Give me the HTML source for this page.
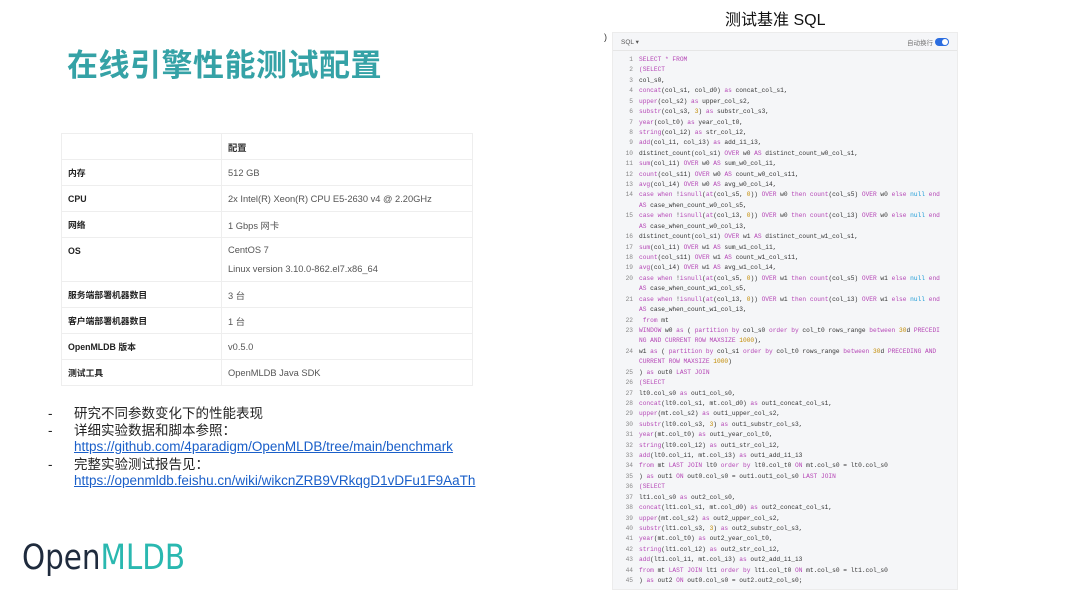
<!DOCTYPE html>
<html><head><meta charset="utf-8"><style>
*{margin:0;padding:0;box-sizing:border-box}
body{width:1080px;height:596px;background:#fff;position:relative;overflow:hidden;font-family:"Liberation Sans","Noto Sans CJK SC",sans-serif}
.title{position:absolute;left:67px;top:40px;font-size:31px;font-weight:bold;color:#35a2a6;letter-spacing:0.5px}
.sub{position:absolute;left:725px;top:6px;font-size:16px;color:#111}
table{position:absolute;left:61px;top:133px;width:412px;border-collapse:collapse;font-size:9.3px;color:#555}
td{border:1px solid #eee;padding:0 6px;height:26px;vertical-align:middle}
td.k{width:160px;font-weight:bold;color:#222;font-size:8.8px}
.bul{position:absolute;left:48px;top:406px;font-size:13.5px;color:#222;line-height:16.5px}
.bul div{position:relative;padding-left:26px}
.bul span.d{position:absolute;left:0}
.bul a{color:#1a5fc9;text-decoration:underline}
.logo{position:absolute;left:22px;top:538px;font-size:35px;letter-spacing:0;font-family:"DejaVu Sans",sans-serif;transform:scale(0.84,1);transform-origin:left top;white-space:nowrap}
.panel{position:absolute;left:612px;top:32px;width:346px;height:558px;background:#f5f6f8;border:1px solid #ececec}
.ph{height:18px;border-bottom:1px solid #e6e6e6;font-size:6.5px;color:#555;position:relative}
.code{position:absolute;left:0;top:22px;font-family:"Liberation Mono",monospace;font-size:6.2px;color:#333;line-height:10.42px;white-space:pre}
.ln{display:inline-block;width:20px;text-align:right;color:#888;margin-right:6px}
.m{color:#b546b6}.n{color:#c28a00}.b{color:#1b9ad6}
</style></head><body>
<div class="title">在线引擎性能测试配置</div>
<div class="sub">测试基准 SQL</div>
<div style="position:absolute;left:604px;top:32px;font-size:9px;color:#333">)</div>
<table>
<tr><td class="k"></td><td style="font-weight:bold;color:#333">配置</td></tr>
<tr><td class="k">内存</td><td>512 GB</td></tr>
<tr><td class="k">CPU</td><td>2x Intel(R) Xeon(R) CPU E5-2630 v4 @ 2.20GHz</td></tr>
<tr><td class="k">网络</td><td>1 Gbps 网卡</td></tr>
<tr><td class="k" style="height:44px;vertical-align:top;padding-top:8px">OS</td><td style="line-height:19px">CentOS 7<br>Linux version 3.10.0-862.el7.x86_64</td></tr>
<tr><td class="k">服务端部署机器数目</td><td>3 台</td></tr>
<tr><td class="k">客户端部署机器数目</td><td>1 台</td></tr>
<tr><td class="k">OpenMLDB 版本</td><td>v0.5.0</td></tr>
<tr><td class="k">测试工具</td><td>OpenMLDB Java SDK</td></tr>
</table>
<div class="bul">
<div><span class="d">-</span>研究不同参数变化下的性能表现</div>
<div><span class="d">-</span>详细实验数据和脚本参照：<br><a>https://github.com/4paradigm/OpenMLDB/tree/main/benchmark</a></div>
<div style="margin-top:1px"><span class="d">-</span>完整实验测试报告见：<br><a>https://openmldb.feishu.cn/wiki/wikcnZRB9VRkqgD1vDFu1F9AaTh</a></div>
</div>
<div class="logo"><span style="color:#1f2b3d">Open</span><span style="color:#2ab8b0">MLDB</span></div>
<div class="panel">
<div class="ph"><span style="position:absolute;left:8px;top:5px">SQL ▾</span><span style="position:absolute;right:24px;top:4px;color:#777">自动换行</span><span style="position:absolute;right:8px;top:5px;width:14px;height:8px;border-radius:4px;background:#2b6de0"><span style="position:absolute;right:1px;top:1px;width:6px;height:6px;border-radius:3px;background:#fff"></span></span></div>
<div class="code"><span class="ln">1</span><span class="m">SELECT * FROM</span>
<span class="ln">2</span><span class="m">(SELECT</span>
<span class="ln">3</span>col_s0,
<span class="ln">4</span><span class="m">concat</span>(col_s1, col_d0) <span class="m">as</span> concat_col_s1,
<span class="ln">5</span><span class="m">upper</span>(col_s2) <span class="m">as</span> upper_col_s2,
<span class="ln">6</span><span class="m">substr</span>(col_s3, <span class="n">3</span>) <span class="m">as</span> substr_col_s3,
<span class="ln">7</span><span class="m">year</span>(col_t0) <span class="m">as</span> year_col_t0,
<span class="ln">8</span><span class="m">string</span>(col_i2) <span class="m">as</span> str_col_i2,
<span class="ln">9</span><span class="m">add</span>(col_i1, col_i3) <span class="m">as</span> add_i1_i3,
<span class="ln">10</span>distinct_count(col_s1) <span class="m">OVER</span> w0 <span class="m">AS</span> distinct_count_w0_col_s1,
<span class="ln">11</span><span class="m">sum</span>(col_i1) <span class="m">OVER</span> w0 <span class="m">AS</span> sum_w0_col_i1,
<span class="ln">12</span><span class="m">count</span>(col_s11) <span class="m">OVER</span> w0 <span class="m">AS</span> count_w0_col_s11,
<span class="ln">13</span><span class="m">avg</span>(col_i4) <span class="m">OVER</span> w0 <span class="m">AS</span> avg_w0_col_i4,
<span class="ln">14</span><span class="m">case when</span> !<span class="m">isnull</span>(<span class="m">at</span>(col_s5, <span class="n">0</span>)) <span class="m">OVER</span> w0 <span class="m">then count</span>(col_s5) <span class="m">OVER</span> w0 <span class="m">else</span> <span class="b">null</span> <span class="m">end</span>
<span class="ln"></span><span class="m">AS</span> case_when_count_w0_col_s5,
<span class="ln">15</span><span class="m">case when</span> !<span class="m">isnull</span>(<span class="m">at</span>(col_i3, <span class="n">0</span>)) <span class="m">OVER</span> w0 <span class="m">then count</span>(col_i3) <span class="m">OVER</span> w0 <span class="m">else</span> <span class="b">null</span> <span class="m">end</span>
<span class="ln"></span><span class="m">AS</span> case_when_count_w0_col_i3,
<span class="ln">16</span>distinct_count(col_s1) <span class="m">OVER</span> w1 <span class="m">AS</span> distinct_count_w1_col_s1,
<span class="ln">17</span><span class="m">sum</span>(col_i1) <span class="m">OVER</span> w1 <span class="m">AS</span> sum_w1_col_i1,
<span class="ln">18</span><span class="m">count</span>(col_s11) <span class="m">OVER</span> w1 <span class="m">AS</span> count_w1_col_s11,
<span class="ln">19</span><span class="m">avg</span>(col_i4) <span class="m">OVER</span> w1 <span class="m">AS</span> avg_w1_col_i4,
<span class="ln">20</span><span class="m">case when</span> !<span class="m">isnull</span>(<span class="m">at</span>(col_s5, <span class="n">0</span>)) <span class="m">OVER</span> w1 <span class="m">then count</span>(col_s5) <span class="m">OVER</span> w1 <span class="m">else</span> <span class="b">null</span> <span class="m">end</span>
<span class="ln"></span><span class="m">AS</span> case_when_count_w1_col_s5,
<span class="ln">21</span><span class="m">case when</span> !<span class="m">isnull</span>(<span class="m">at</span>(col_i3, <span class="n">0</span>)) <span class="m">OVER</span> w1 <span class="m">then count</span>(col_i3) <span class="m">OVER</span> w1 <span class="m">else</span> <span class="b">null</span> <span class="m">end</span>
<span class="ln"></span><span class="m">AS</span> case_when_count_w1_col_i3,
<span class="ln">22</span> <span class="m">from</span> mt
<span class="ln">23</span><span class="m">WINDOW</span> w0 <span class="m">as</span> ( <span class="m">partition by</span> col_s0 <span class="m">order by</span> col_t0 rows_range <span class="m">between</span> <span class="n">30</span>d <span class="m">PRECEDI</span>
<span class="ln"></span><span class="m">NG AND CURRENT ROW MAXSIZE</span> <span class="n">1000</span>),
<span class="ln">24</span>w1 <span class="m">as</span> ( <span class="m">partition by</span> col_s1 <span class="m">order by</span> col_t0 rows_range <span class="m">between</span> <span class="n">30</span>d <span class="m">PRECEDING AND</span>
<span class="ln"></span><span class="m">CURRENT ROW MAXSIZE</span> <span class="n">1000</span>)
<span class="ln">25</span>) <span class="m">as</span> out0 <span class="m">LAST JOIN</span>
<span class="ln">26</span><span class="m">(SELECT</span>
<span class="ln">27</span>lt0.col_s0 <span class="m">as</span> out1_col_s0,
<span class="ln">28</span><span class="m">concat</span>(lt0.col_s1, mt.col_d0) <span class="m">as</span> out1_concat_col_s1,
<span class="ln">29</span><span class="m">upper</span>(mt.col_s2) <span class="m">as</span> out1_upper_col_s2,
<span class="ln">30</span><span class="m">substr</span>(lt0.col_s3, <span class="n">3</span>) <span class="m">as</span> out1_substr_col_s3,
<span class="ln">31</span><span class="m">year</span>(mt.col_t0) <span class="m">as</span> out1_year_col_t0,
<span class="ln">32</span><span class="m">string</span>(lt0.col_i2) <span class="m">as</span> out1_str_col_i2,
<span class="ln">33</span><span class="m">add</span>(lt0.col_i1, mt.col_i3) <span class="m">as</span> out1_add_i1_i3
<span class="ln">34</span><span class="m">from</span> mt <span class="m">LAST JOIN</span> lt0 <span class="m">order by</span> lt0.col_t0 <span class="m">ON</span> mt.col_s0 = lt0.col_s0
<span class="ln">35</span>) <span class="m">as</span> out1 <span class="m">ON</span> out0.col_s0 = out1.out1_col_s0 <span class="m">LAST JOIN</span>
<span class="ln">36</span><span class="m">(SELECT</span>
<span class="ln">37</span>lt1.col_s0 <span class="m">as</span> out2_col_s0,
<span class="ln">38</span><span class="m">concat</span>(lt1.col_s1, mt.col_d0) <span class="m">as</span> out2_concat_col_s1,
<span class="ln">39</span><span class="m">upper</span>(mt.col_s2) <span class="m">as</span> out2_upper_col_s2,
<span class="ln">40</span><span class="m">substr</span>(lt1.col_s3, <span class="n">3</span>) <span class="m">as</span> out2_substr_col_s3,
<span class="ln">41</span><span class="m">year</span>(mt.col_t0) <span class="m">as</span> out2_year_col_t0,
<span class="ln">42</span><span class="m">string</span>(lt1.col_i2) <span class="m">as</span> out2_str_col_i2,
<span class="ln">43</span><span class="m">add</span>(lt1.col_i1, mt.col_i3) <span class="m">as</span> out2_add_i1_i3
<span class="ln">44</span><span class="m">from</span> mt <span class="m">LAST JOIN</span> lt1 <span class="m">order by</span> lt1.col_t0 <span class="m">ON</span> mt.col_s0 = lt1.col_s0
<span class="ln">45</span>) <span class="m">as</span> out2 <span class="m">ON</span> out0.col_s0 = out2.out2_col_s0;</div>
</div>
</body></html>
